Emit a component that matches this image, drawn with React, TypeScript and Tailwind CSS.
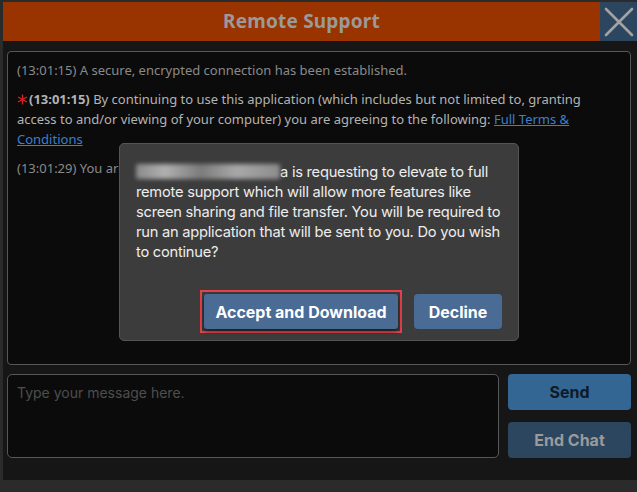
import React from "react";

export default function App() {
  return (
    <div className="w-[637px] h-[492px] bg-[#2b2b2b] pt-[2px] pl-[3px] overflow-hidden flex flex-col" style={{ fontFamily: '"Noto Sans", sans-serif' }}>
      {/* Header */}
      <div className="h-[39px] flex shrink-0">
        <div className="flex-1 bg-[#993300] flex items-center justify-center">
          <span className="text-[19px] font-bold text-[#9a9a9a] tracking-[0.2px]" style={{ fontFamily: '"Noto Sans", sans-serif' }}>Remote Support</span>
        </div>
        <div className="w-[37px] bg-[#2c4660] flex items-center justify-center">
          <svg width="30" height="30" viewBox="0 0 30 30">
            <path d="M2 2 L28 28 M28 2 L2 28" stroke="#a3a3a3" strokeWidth="2.6" strokeLinecap="round" />
          </svg>
        </div>
      </div>
      {/* Main */}
      <div className="h-[439px] bg-[#161616] pt-[10px] pl-[4px] pr-[6px] flex flex-col shrink-0">
        <div className="relative h-[314px] bg-[#0b0b0b] border border-[#575757] rounded-[4px] px-[9px] pt-[8px] text-[13px] leading-[20px]">
          <p className="text-[#8a8a8a] mb-[9px]">(13:01:15) A secure, encrypted connection has been established.</p>
          <p className="text-[#b3b3b3] mb-[9px]">
            <svg width="11" height="11" viewBox="0 0 12 12" className="inline-block align-[-1px] mr-[1px]">
              <path d="M6 0.5 V11.5 M1.2 3.25 L10.8 8.75 M10.8 3.25 L1.2 8.75" stroke="#d02525" strokeWidth="1.5" />
            </svg>
            <span className="font-bold">(13:01:15)</span> By continuing to use this application (which includes but not limited to, granting access to and/or viewing of your computer) you are agreeing to the following:{" "}
            <a className="text-[#3d7fcc] underline">Full Terms &amp; Conditions</a>
          </p>
          <p className="text-[#8a8a8a]">(13:01:29) You are now chatting with a support representative.</p>

          {/* Dialog */}
          <div className="absolute left-[111px] top-[91px] w-[400px] h-[198px] bg-[#3c3c3c] border border-[#555] rounded-[5px] pl-[16px] pr-[5px] pt-[18px] flex flex-col" style={{ fontFamily: 'Inter, sans-serif' }}>
            <p className="text-[14.7px] leading-[20px] text-[#ededed] tracking-[-0.25px]">
              <span className="inline-block w-[144px] h-[15px] align-[-2px] rounded-[2px] blur-[2px]" style={{ background: "linear-gradient(90deg,#8a8a8a 0%,#b0b0b0 20%,#7c7c7c 45%,#a8a8a8 70%,#8c8c8c 100%)" }}></span>
              a is requesting to elevate to full remote support which will allow more features like screen sharing and file transfer. You will be required to run an application that will be sent to you. Do you wish to continue?
            </p>
            <div className="flex-1" />
            <div className="flex justify-end items-center gap-[12px] pb-[7px] pr-[11px]">
              <div className="p-[2px] border-[2px] border-[#e8404a] ">
                <button className="w-[194px] h-[35px] bg-[#4a6b94] rounded-[3px] text-white font-bold text-[16px] shadow-[0_2px_4px_rgba(0,0,0,0.6)]">Accept and Download</button>
              </div>
              <button className="w-[88px] h-[35px] bg-[#4a6b94] rounded-[4px] text-white font-bold text-[16px]">Decline</button>
            </div>
          </div>
        </div>
        <div className="flex gap-[9px] mt-[9px]">
          <div className="w-[492px] h-[84px] bg-[#0b0b0b] border border-[#575757] rounded-[5px] px-[9px] pt-[7px] text-[14px] text-[#4e4e4e]" style={{ fontFamily: 'Inter, sans-serif' }}>
            Type your message here.
          </div>
          <div className="flex flex-col gap-[12px]" style={{ fontFamily: 'Inter, sans-serif' }}>
            <button className="w-[123px] h-[36px] bg-[#336693] rounded-[4px] text-[#0e1a26] font-bold text-[16px]">Send</button>
            <button className="w-[123px] h-[36px] bg-[#2c4660] rounded-[4px] text-[#9a9a9a] font-bold text-[16px]">End Chat</button>
          </div>
        </div>
      </div>
    </div>
  );
}
